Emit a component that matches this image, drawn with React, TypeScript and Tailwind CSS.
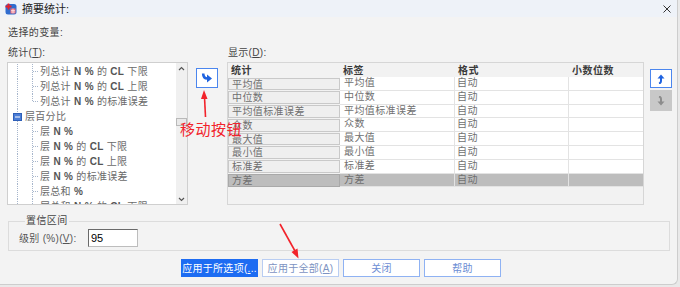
import React from 'react';

type TreeRow = { t: string; kind: 'parent' | 'child'; last?: boolean };

const treeRows: TreeRow[] = [
  { t: '列总计 N % 的 CL 下限', kind: 'child' },
  { t: '列总计 N % 的 CL 上限', kind: 'child' },
  { t: '列总计 N % 的标准误差', kind: 'child', last: true },
  { t: '层百分比', kind: 'parent' },
  { t: '层 N %', kind: 'child' },
  { t: '层 N % 的 CL 下限', kind: 'child' },
  { t: '层 N % 的 CL 上限', kind: 'child' },
  { t: '层 N % 的标准误差', kind: 'child' },
  { t: '层总和 %', kind: 'child' },
  { t: '层总和 N % 的 CL 下限', kind: 'child' },
];

const stats = ['平均值', '中位数', '平均值标准误差', '众数', '最大值', '最小值', '标准差', '方差'];

const dot = '#a7b6cc';

// latin tokens (N, %, CL) look heavier than the chinese ones in the original
function TreeText({ t }: { t: string }) {
  const parts = t.split(' ');
  return (
    <span className="text-[10px] leading-[15px] tracking-[0.3px] text-[#6a6a6a]">
      {parts.map((p, i) => (
        <React.Fragment key={i}>
          {i > 0 ? ' ' : ''}
          {/^[A-Z%]+$/.test(p) ? <span className="font-bold text-[#555]">{p}</span> : p}
        </React.Fragment>
      ))}
    </span>
  );
}

function Gutter({ kind, last }: { kind: 'parent' | 'child'; last?: boolean }) {
  if (kind === 'parent') {
    return (
      <svg width="17" height="15" className="flex-none">
        <line x1="9.5" y1="0" x2="9.5" y2="15" stroke={dot} strokeDasharray="1 1" />
        <rect x="5.5" y="4.5" width="8" height="7" fill="#4b7dd6" stroke="#2e5fb8" />
        <line x1="7" y1="8" x2="12" y2="8" stroke="#fff" />
      </svg>
    );
  }
  return (
    <svg width="32" height="15" className="flex-none">
      <line x1="9.5" y1="0" x2="9.5" y2="15" stroke={dot} strokeDasharray="1 1" />
      <line x1="24.5" y1="0" x2="24.5" y2={last ? 8 : 15} stroke={dot} strokeDasharray="1 1" />
      <line x1="25" y1="7.5" x2="31" y2="7.5" stroke={dot} strokeDasharray="1 1" />
    </svg>
  );
}

function TreePanel() {
  return (
    <div className="flex h-[143px] w-[181px] flex-none border border-[#cfcfcf] bg-white">
      <div className="flex-1 overflow-hidden pt-[1px]">
        {treeRows.map((r, i) => (
          <div key={i} className="flex h-[15px] items-center whitespace-nowrap">
            <Gutter kind={r.kind} last={r.last} />
            <TreeText t={r.t} />
          </div>
        ))}
      </div>
      <div className="flex w-[11px] flex-none flex-col bg-[#f0f0f0]">
        <div className="flex h-[10px] items-center justify-center">
          <svg width="7" height="5"><path d="M1 4 L3.5 1.5 L6 4" fill="none" stroke="#555" strokeWidth="1.2" /></svg>
        </div>
        <div className="flex-1">
          <div className="mt-[45px] h-[8px] border border-[#b9b9b9] bg-[#e9e9e9]" />
        </div>
        <div className="flex h-[10px] items-center justify-center">
          <svg width="7" height="5"><path d="M1 1 L3.5 3.5 L6 1" fill="none" stroke="#555" strokeWidth="1.2" /></svg>
        </div>
      </div>
    </div>
  );
}

function StatsTable() {
  return (
    <div className="flex h-[143px] w-[417px] flex-none flex-col border border-[#d6d6d6] bg-[#f2f2f2]">
      <div className="flex h-[14px] flex-none items-center text-[10px] font-bold tracking-[0.5px] text-[#3a3a3a]">
        <div className="w-[112px] pl-[3px]">统计</div>
        <div className="w-[115px] pl-[3px]">标签</div>
        <div className="w-[114px] pl-[3px]">格式</div>
        <div className="flex-1 pl-[3px]">小数位数</div>
      </div>
      {stats.map((s, i) => {
        const sel = i === stats.length - 1;
        return (
          <div key={s} className={'flex h-[13.8px] flex-none text-[10px] leading-[12px] tracking-[0.4px] text-[#707070] ' + (sel ? 'bg-[#bdbdbd]' : 'bg-white')}>
            <div className={'w-[112px] flex-none py-[0.5px] ' + (sel ? 'bg-[#bdbdbd]' : 'bg-[#f2f2f2]')}>
              <div className={'h-full border pl-[3px] ' + (sel ? 'border-[#a9a9a9] bg-[#bdbdbd]' : 'border-[#c9c9c9] bg-[#efefef]')}>{s}</div>
            </div>
            <div className="w-[115px] flex-none border-b border-r border-[#e3e3e3] pl-[4px]">{s}</div>
            <div className="w-[114px] flex-none border-b border-r border-[#e3e3e3] pl-[2px]">自动</div>
            <div className="flex-1 border-b border-[#e3e3e3]" />
          </div>
        );
      })}
    </div>
  );
}

export default function App() {
  return (
    <div className="relative h-[287px] w-[680px] overflow-hidden bg-[#e9e9e9] font-['Liberation_Sans','Noto_Sans_CJK_SC',sans-serif]">
      <div className="h-[285px] w-[678px] overflow-hidden rounded-br-[6px] border-b border-r border-[#cdcdcd] bg-[#f3f3f3]">
        {/* title bar */}
        <div className="flex h-[17px] items-center bg-[#eef2f8] pl-[5px] pt-[1px]">
          <svg width="12" height="12" viewBox="0 0 12 12" className="flex-none">
            <rect x="0.5" y="1" width="11" height="10.5" rx="2.5" fill="#2f6ccf" />
            <rect x="5.5" y="5.5" width="5" height="5" fill="#f06a7a" />
            <path d="M6 7.5h4M6 9h4M8 5.5v5" stroke="#fff" strokeWidth="0.6" />
            <path d="M3.5 0.5v6M0.5 3.5h6" stroke="#e8202a" strokeWidth="1.8" />
          </svg>
          <span className="ml-[5px] text-[11px] text-[#1f1f1f]">摘要统计:</span>
          <svg width="10" height="8" viewBox="0 0 10 8" className="ml-auto mr-[5px]">
            <path d="M1.5 0.5L8.5 7.5M8.5 0.5L1.5 7.5" stroke="#333" strokeWidth="1" />
          </svg>
        </div>

        <div className="px-[7px]">
          <div className="mt-[10px] h-[12px] pl-[1px] text-[10px] leading-[12px] tracking-[0.4px] text-[#444]">选择的变量:</div>

          <div className="mt-[8px] flex h-[12px] text-[10px] leading-[12px] tracking-[0.3px] text-[#444]">
            <div className="w-[221px] pl-[1px]">
              统计(<span className="underline">T</span>):
            </div>
            <div>
              显示(<span className="underline">D</span>):
            </div>
          </div>

          <div className="mt-[3px] flex">
            <TreePanel />
            <div className="w-[39px] flex-none pl-[8px] pt-[6px]">
              <div className="flex h-[20px] w-[22px] items-center justify-center border border-[#4b86ee] bg-white">
                <svg width="12" height="10" viewBox="0 0 12 10">
                  <path d="M2.2 0.5 Q2.2 5.5 6.5 5.5" fill="none" stroke="#1f63e0" strokeWidth="2.6" />
                  <path d="M6 1.5 L11 5.5 L6 9.5 Z" fill="#1f63e0" />
                </svg>
              </div>
            </div>
            <StatsTable />
            <div className="ml-[6px] flex w-[22px] flex-none flex-col gap-[2px] pt-[7px]">
              <div className="flex h-[19px] items-center justify-center border border-[#4b86ee] bg-white">
                <svg width="8" height="10" viewBox="0 0 8 10">
                  <path d="M4 0.5 L7.5 4.5 L0.5 4.5 Z" fill="#1f63e0" />
                  <path d="M4 4 L4 7 Q4 9 2 9.5" fill="none" stroke="#1f63e0" strokeWidth="2" />
                </svg>
              </div>
              <div className="flex h-[21px] items-center justify-center bg-[#c8c8c8]">
                <svg width="8" height="10" viewBox="0 0 8 10">
                  <path d="M4 9.5 L7.5 5.5 L0.5 5.5 Z" fill="#8c8c8c" />
                  <path d="M4 6 L4 3 Q4 1 2 0.5" fill="none" stroke="#8c8c8c" strokeWidth="2" />
                </svg>
              </div>
            </div>
          </div>

          <fieldset className="ml-[1px] mt-[10px] w-[662px] border border-[#dcdcdc] px-[10px] pb-[3px]">
            <legend className="ml-[6px] px-[1px] text-[10px] leading-[12px] tracking-[0.4px] text-[#444]">置信区间</legend>
            <div className="flex items-center pt-[2px]">
              <div className="w-[69px] text-[10px] tracking-[0.3px] text-[#555]">
                级别 (%)(<span className="underline">V</span>):
              </div>
              <div className="flex h-[18px] w-[50px] items-center border border-b-[#bdbdbd] border-l-[#6a6a6a] border-r-[#bdbdbd] border-t-[#6a6a6a] bg-white pl-[2px] text-[11px] text-black">
                95
              </div>
            </div>
          </fieldset>

          <div className="ml-[174px] mt-[8px] flex gap-[4px] text-[10px] tracking-[0.3px]">
            <div className="flex h-[18px] w-[77px] items-center justify-center whitespace-nowrap bg-[#1d6cf2] text-white">
              应用于所选项(<span className="underline">.</span>..
            </div>
            <div className="flex h-[18px] w-[77px] items-center justify-center border border-[#b9cdf2] bg-white text-[#7d93c2]">
              应用于全部(<span className="underline">A</span>)
            </div>
            <div className="flex h-[18px] w-[77px] items-center justify-center border border-[#8fb2f3] bg-white text-[#6d8dd4]">
              关闭
            </div>
            <div className="flex h-[18px] w-[77px] items-center justify-center border border-[#8fb2f3] bg-white text-[#6d8dd4]">
              帮助
            </div>
          </div>
        </div>
      </div>

      {/* red annotations */}
      <div className="pointer-events-none absolute left-[180px] top-[121px] text-[15px] leading-[18px] tracking-[0.5px] text-[#f2232b]">移动按钮</div>
      <svg width="680" height="287" className="pointer-events-none absolute left-0 top-0">
        <line x1="205.5" y1="117" x2="204.5" y2="97" stroke="#f2232b" strokeWidth="1.6" />
        <path d="M204 90 L207.5 99 L201 99 Z" fill="#f2232b" />
        <line x1="280" y1="224" x2="295" y2="251" stroke="#f2232b" strokeWidth="1.6" />
        <path d="M298.5 258.5 L291.5 252 L297.5 248.5 Z" fill="#f2232b" />
      </svg>
    </div>
  );
}
